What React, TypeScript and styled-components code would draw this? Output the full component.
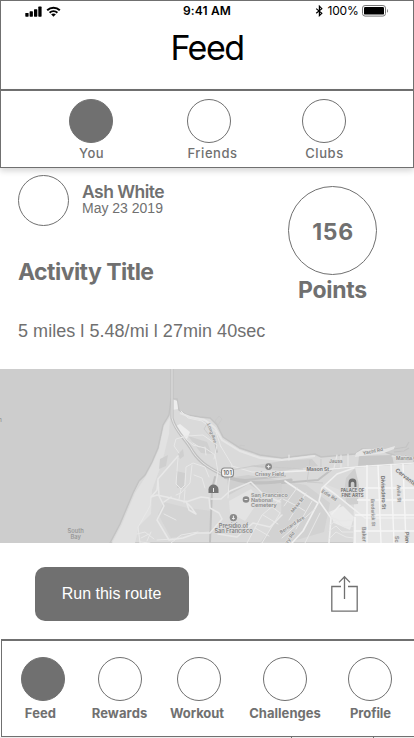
import React from 'react';
import styled, { createGlobalStyle, css } from 'styled-components';

const INK = '#707070';
const SANS = '"Inter", "Roboto", sans-serif';
const HELV = '"Liberation Sans", Arial, sans-serif';

const GlobalStyle = createGlobalStyle`
  *, *::before, *::after { box-sizing: border-box; }
  html, body { margin: 0; padding: 0; background: #fff; overflow: hidden; }
  #root { width: 414px; }
`;

const Screen = styled.div`
  display: flex;
  flex-direction: column;
  width: 414px;
  height: 738px;
  overflow: hidden;
  background: #fff;
  color: ${INK};
  font-family: ${SANS};
`;

const Header = styled.header`
  display: flex;
  flex-direction: column;
  height: 90px;
  flex: none;
  border: 1px solid ${INK};
  color: #000;
`;

const StatusBar = styled.div`
  display: grid;
  grid-template-columns: 1fr auto 1fr;
  align-items: center;
  height: 20px;
  padding: 0 24px;
`;

const StatusGroup = styled.div<{ $end?: boolean }>`
  display: flex;
  align-items: center;
  gap: ${(p) => (p.$end ? 3.5 : 2.5)}px;
  justify-content: ${(p) => (p.$end ? 'flex-end' : 'flex-start')};
`;

const StatusText = styled.span<{ $strong?: boolean }>`
  font-size: 12px;
  line-height: 18px;
  font-weight: ${(p) => (p.$strong ? 600 : 400)};
  letter-spacing: ${(p) => (p.$strong ? '0.14px' : '-0.2px')};
`;

const PageTitle = styled.h1`
  margin: 7px 0 0;
  text-align: center;
  font-size: 34px;
  line-height: 40px;
  font-weight: 400;
  letter-spacing: -1.5px;
`;

const Tabs = styled.nav`
  display: grid;
  grid-template-columns: 146px 90px 140px;
  justify-content: start;
  height: 78px;
  flex: none;
  padding: 8px 0 0 17px;
  border: 1px solid ${INK};
  background: #fff;
  box-shadow: 0 3px 6px rgba(0, 0, 0, 0.16);
  z-index: 1;
`;

const BottomNav = styled.nav`
  display: grid;
  grid-template-columns: 77px 77px 81px 91px 79px;
  height: 98px;
  flex: none;
  margin-left: 1px;
  padding: 16px 0 0 2.5px;
  border: 1px solid ${INK};
  border-top-width: 2px;
  border-right: 0;
`;

const NavItem = styled.div`
  display: flex;
  flex-direction: column;
  align-items: center;
`;

const Ring = styled.span<{ $size: number; $filled?: boolean }>`
  display: flex;
  align-items: center;
  justify-content: center;
  flex: none;
  width: ${(p) => p.$size}px;
  height: ${(p) => p.$size}px;
  border: 1px solid ${INK};
  border-radius: 50%;
  background: ${(p) => (p.$filled ? INK : '#fff')};
`;

const NavLabel = styled.span<{ $bold?: boolean; $shift?: number; $track?: number }>`
  font-size: 13px;
  line-height: 16px;
  white-space: nowrap;
  font-weight: ${(p) => (p.$bold ? 700 : 500)};
  letter-spacing: ${(p) => p.$track ?? 0}px;
  margin-top: ${(p) => (p.$bold ? 4 : 2)}px;
  transform: translateX(${(p) => p.$shift ?? 0}px);
`;

const Activity = styled.section`
  display: flex;
  justify-content: space-between;
  height: 201px;
  flex: none;
  padding: 0 37px 0 18px;
`;

const Summary = styled.div`
  display: flex;
  flex-direction: column;
  padding-top: 7px;
`;

const Author = styled.div`
  display: flex;
  gap: 13px;
`;

const AuthorText = styled.div`
  display: flex;
  flex-direction: column;
  padding-top: 7px;
`;

const Name = styled.span`
  font-size: 17.5px;
  line-height: 20px;
  font-weight: 600;
  letter-spacing: -0.54px;
`;

const DateLine = styled.span`
  font-family: ${HELV};
  font-size: 14px;
  line-height: 16px;
  margin-top: -2px;
`;

const heading = css`
  margin: 0;
  font-size: 23px;
  line-height: 28px;
  font-weight: 700;
`;

const ActivityTitle = styled.h2`
  ${heading}
  margin-top: 32px;
  letter-spacing: -0.54px;
`;

const Stats = styled.p`
  margin: 35px 0 0;
  font-family: ${HELV};
  font-size: 18px;
  line-height: 20px;
  letter-spacing: 0.04px;
  white-space: nowrap;
`;

const Score = styled.div`
  display: flex;
  flex-direction: column;
  align-items: center;
  padding-top: 18px;
`;

const ScoreValue = styled.span`
  ${heading}
  letter-spacing: 0.7px;
  padding: 2px 0 0 1px;
`;

const ScoreLabel = styled.span`
  ${heading}
  margin-top: 1px;
  letter-spacing: -0.25px;
`;

const MapFrame = styled.div`
  height: 174px;
  flex: none;
  background: #cdcdcd;
  svg { display: block; }
`;

const Actions = styled.section`
  display: flex;
  justify-content: space-between;
  align-items: flex-start;
  height: 96px;
  flex: none;
  padding: 24px 56px 0 35px;
`;

const RunButton = styled.button`
  width: 154px;
  height: 54px;
  padding: 0 1px 1px 0;
  border: 0;
  border-radius: 10px;
  background: ${INK};
  color: #fff;
  font-family: ${HELV};
  font-size: 16px;
`;

const ShareButton = styled.button`
  display: flex;
  padding: 8px 0 0;
  border: 0;
  background: none;
  color: ${INK};
`;

const FooterEdge = styled.div`
  display: flex;
  gap: 81px;
  height: 1px;
  flex: none;
  padding-left: 291px;
  background: #eee;
`;
const Tick = styled.span`
  width: 1px;
  height: 1px;
  background: ${INK};
`;

const SignalIcon = () => (
  <svg width="18" height="11" viewBox="0 0 18 11">
    <rect x="0.3" y="7" width="3.3" height="3.7" rx=".6" />
    <rect x="4.6" y="5.3" width="3.3" height="5.4" rx=".6" />
    <rect x="9" y="3.2" width="3.3" height="7.5" rx=".6" />
    <rect x="13.3" y="0.6" width="3.3" height="10.1" rx=".6" />
  </svg>
);

const WifiIcon = () => (
  <svg width="15" height="11" viewBox="0 0 15 11" fill="none" stroke="#000" strokeWidth="2">
    <path d="M1.2 4.2C4.8.8 10.2.8 13.8 4.2" />
    <path d="M3.6 6.8C5.8 4.8 9.2 4.8 11.4 6.8" />
    <path d="M5.1 8.3 7.5 10.8 9.9 8.3C8.5 7.2 6.5 7.2 5.1 8.3Z" fill="#000" stroke="none" />
  </svg>
);

const BluetoothIcon = () => (
  <svg width="9" height="12" viewBox="0 0 9 12" fill="none" stroke="#000" strokeWidth="1.2">
    <path d="M1.2 3.6 6.8 8.2 4.4 10.6V1.2L6.8 3.6 1.2 8.2" />
  </svg>
);

const BatteryIcon = () => (
  <svg width="27" height="12" viewBox="0 0 27 12">
    <rect x="0.5" y="0.5" width="23" height="10.6" rx="2.6" fill="none" stroke="#777" />
    <rect x="2" y="2" width="20" height="7.6" rx="1.2" />
    <path d="M25 4v3.8c1.3-.6 1.3-3.2 0-3.8Z" fill="#777" />
  </svg>
);

const ShareIcon = () => (
  <svg width="27" height="38" viewBox="0 0 27 38" fill="none" stroke="currentColor" strokeWidth="1.3">
    <path d="M10 11.5H.8V36.2H26.2V11.5H17" />
    <path d="M13.5 24V2M8 7.4 13.5 1.8 19 7.4" />
  </svg>
);

const gridStreets = [
  'M359 119H414M357 131H414M355 146H414M354 162H414',
  'M367 96V174M378 96 381 174M391 95 394 174M403 95 406 174M355 148V174',
];

const RouteMap = () => (
  <svg width="414" height="174" viewBox="0 0 414 174" fontFamily={SANS}>
    <rect width="414" height="174" fill="#cdcdcd" />
    <path
      d="M110 174 120 155 133 124 139 112 145 106 152 93 158 79 163 56 169 46 171 30 177 30 179 41 187 46 200 48 210 49 217 56 223 68 240 79 260 86 282 89 315 85 321 88 355 85 362 80 382 82 408 91 414 90V174Z"
      fill="#dadada"
      stroke="#c3c3c3"
      strokeWidth="1.4"
    />
    <path d="M112 174 122 155 135 124 146 107 153 94 159 80 164 57 170 48 169 65 162 94 152 121 151 145 139 157 135 174Z" fill="#e2e2e2" />
    <path d="M205 51 215 59 222 71 240 82 260 89 282 91 315 87 M180 44 190 48 205 51" fill="none" stroke="#e6e6e6" strokeWidth="2" />
    <path d="M172 30 177 32 178 40 172 41ZM176 57 180 55 190 63 187 70 182 67Z" fill="#ededed" />
    <path d="M178 85 183 80 184 87 180 90ZM160 90 168 86 166 97 159 100ZM176 102 185 104 184 119 177 119Z" fill="#cfcfcf" />
    <path d="M188 67 207 73 212 85 201 84Z" fill="#d0d0d0" />
    <path d="M282 92 312 90 318 97 281 102 250 97Z" fill="#cecece" />
    <path d="M359 87 392 86 394 96 358 97Z" fill="#c7c7c7" />
    <path d="M355 88 356 84 363 80 385 80 395 77 394 80 384 84 361 87Z" fill="#e6e6e6" />
    <path d="M394 80 406 78 409 73M394 83 404 82 409 79" fill="none" stroke="#c3c3c3" strokeWidth="1.2" />
    <path d="M355 98 414 95V174H353Z" fill="#e6e6e6" />
    <path d="M346 109 355 99 359 116 358 135 347 136 344 123Z" fill="#cfcfcf" />
    <path d="M329 143 343 137 354 148 350 161 334 154Z" fill="#eaeaea" />
    <path d="M229 132 251 120 260 130 245 152 230 144Z" fill="#e3e3e3" />
    <path d="M158 145 164 133 188 139 212 142 209 162 171 169Z" fill="#d4d4d4" />
    <path d="M227 109 248 106 290 113 280 130 262 124 249 115 229 126Z" fill="#cfcfcf" />
    <path d="M282 112 306 116 330 134 324 163 286 174H260L281 147Z" fill="#d2d2d2" />
    <path d="M325 115 345 123 333 132 321 123Z" fill="#dfdfdf" />

    <g fill="none" stroke="#c1c1c1" strokeLinecap="round" strokeLinejoin="round">
      <path d="M172 0V49C175 62 186 70 193 83 201 95 211 100 225 107 246 116 266 115 291 111" strokeWidth="3.2" />
      <path d="M215 108 212 120 210 173M282 114 318 111 331 101M225 109 245 111 285 107" strokeWidth="2" />
      <path d="M207 55 211 63 215 73 217 83M330 100 353 98 414 94" strokeWidth="1.5" />
    </g>
    <g fill="none" stroke="#e8e8e8" strokeLinecap="round" strokeLinejoin="round">
      <path d="M172 0V49C175 62 186 70 193 83 201 95 211 100 225 107" strokeWidth="0.9" />
      <path
        strokeWidth="1"
        d="M181 66 193 76 205 79 215 86 218 103 215 120M179 84 174 77 176 70 187 67 203 66 217 76 214 90M193 74 199 78M205 78 206 86M178 89 176 115 181 120 185 116 186 98 193 94 205 98 209 108M192 96 190 114 181 124 176 126M194 106 202 109 205 119M181 120 179 130M185 121 184 134"
      />
      <path
        strokeWidth="1.5"
        d="M178 87 158 110 157 121 151 128 157 126 171 129 186 133 201 128 209 129 210 139 219 144 222 150 210 164 197 164 183 169 169 171 157 151 164 137 159 127 158 110M186 132 189 141 196 145 191 138 187 134M164 133 171 128M211 130 221 130 230 122 251 113 264 126 280 133M218 165 237 168 253 154 270 158 282 146"
      />
      <path strokeWidth="1" d="M151 128 150 137 141 153 138 158 140 174M137 165 145 163 154 170M141 169 149 165M147 172 151 163M220 76 232 96 229 113 228 129M232 97 252 103 281 103 333 100" />
      <path strokeWidth="1.6" stroke="#efefef" d="M281 103 320 101 354 98 414 94M354 99 337 105 322 119 319 132 331 149 329 174M285 112 318 134 303 162 292 174M325 118 335 125 365 149H414M332 145 340 136" />
      <path strokeWidth="1" d="M297 119 284 137M306 124 289 151M312 132 296 160M283 130 297 137 305 142M315 140 282 169M320 144 305 174M331 148 340 152 354 151M330 156 337 151 344 158 354 157M329 162 336 157 342 163 353 163M329 170 336 163 346 168 354 169M281 130 262 146 247 174M271 137 280 144M263 146 278 155M255 159 269 167M280 144 262 174" />
      <path strokeWidth="1" d="M181 42 188 49 202 52 216 63 221 78M171 174 181 166 198 163M140 173 150 174M164 145 176 151M157 171 173 170" />
      <path strokeWidth="1.2" d="M289 86V91M341 86V99M348 85V97M337 86 334 99M392 87 414 89" />
    </g>
    <g fill="none" stroke="#c8c8c8" strokeWidth="0.8">
      <path d="M207 55 204 60 214 72M215 52 219 47 222 50 218 56ZM240 80V76L245 77M310 91 307 113 323 114M226 102 253 97 303 100M321 90V98" />
    </g>
    <g fill="none" stroke="#f6f6f6" strokeWidth="1.4">
      {gridStreets.map((d) => <path key={d} d={d} />)}
    </g>

    <rect x="221.5" y="99" width="12" height="9" rx="3" fill="#f2f2f2" stroke="#8a8a8a" strokeWidth="1.1" />
    <g fill="#8a8a8a">
      <circle cx="268.6" cy="97.6" r="3.4" />
      <circle cx="246" cy="130.5" r="3.3" />
      <circle cx="233.4" cy="148.6" r="3.7" />
      <path d="M208.5 124V120.5A5 5 0 0 1 218.5 120.5V124Z" fill="#757575" />
      <path d="M348.6 118V113.5A3.9 3.9 0 0 1 356.4 113.5V118H354.4V114.5A1.8 1.8 0 0 0 350.8 114.5V118Z" fill="#6c6c6c" />
    </g>
    <path d="M268.6 95.8V99.4M266.8 97.6H270.4M213.5 119V123M233.4 146.7V150.6M232 149.5H234.8M244.5 130.5H247.5" stroke="#eee" strokeWidth="1" fill="none" />
    <g fill="#8c8c8c" stroke="#e0e0e0" strokeWidth="1.2" paintOrder="stroke" fontSize="5.4" fontWeight="600">
      <text x="227.5" y="105.7" fontSize="5.7" fill="#666" textAnchor="middle" strokeWidth="0">101</text>
      <text x="255" y="106.5" fontSize="5.1">Crissy Field</text>
      <text x="251" y="128">San Francisco</text>
      <text x="251" y="133">National</text>
      <text x="251" y="138">Cemetery</text>
      <text x="233.5" y="158.5" textAnchor="middle" fill="#808080" fontSize="5.7">Presidio of</text>
      <text x="233.5" y="164" textAnchor="middle" fill="#808080" fontSize="5.6">San Francisco</text>
      <text x="352.5" y="123.3" textAnchor="middle" fontSize="4.3" fill="#666">PALACE OF</text>
      <text x="352.5" y="127.6" textAnchor="middle" fontSize="4.3" fill="#666">FINE ARTS</text>
      <text x="306.5" y="101.5" fontSize="5" fill="#707070">Mason St</text>
      <text x="329" y="94" fontSize="4.8">Jauss</text>
      <text x="363.5" y="86" fontSize="4.8" transform="rotate(-12 363 87)">Yacht Rd</text>
      <text x="396" y="91" fontSize="4.8">Marina Green</text>
      <text transform="translate(395 102) rotate(38)" fontSize="5.5" fill="#707070">Cervantes Blvd</text>
      <text transform="translate(321 123) rotate(32)" fontSize="4.8">Edie Rd</text>
      <text transform="translate(381 107) rotate(88)" fontSize="5.2" fill="#6c6c6c">Divisadero St</text>
      <text transform="translate(371 130) rotate(88)" fontSize="4.6">Broderick St</text>
      <text transform="translate(397 116) rotate(88)" fontSize="4.8">Avila St</text>
      <text transform="translate(362 158) rotate(88)">Baker St</text>
      <text transform="translate(395 167) rotate(88)">Scott St</text>
      <text transform="translate(405 163) rotate(88)" fill="#6c6c6c">Pierce St</text>
      <text transform="translate(293 144) rotate(-52)" fontSize="4.6">Mesa St</text>
      <text transform="translate(281 165) rotate(-33)" fontSize="4.8">Bernard Ave</text>
      <text transform="translate(284 181) rotate(-57)" fontSize="4.8">Barry Rd</text>
      <text transform="translate(207 55) rotate(70)" fontSize="4.6">Long Ave</text>
    </g>
    <g fill="#999" fontSize="5.8" fontWeight="600" textAnchor="middle">
      <text x="75.7" y="164.3">South</text>
      <text x="75.7" y="170.3">Bay</text>
      <text x="0" y="53">n</text>
    </g>
  </svg>
);

const tabs = [
  { label: 'You', track: 0.47, shift: 0.5, filled: true },
  { label: 'Friends', track: 0.53, shift: 3.5 },
  { label: 'Clubs', track: 0.57, shift: 0.5 },
];

const sections = [
  { label: 'Feed', track: 0.1, shift: -2.5, filled: true },
  { label: 'Rewards', track: 0.1, shift: -0.5 },
  { label: 'Workout', track: -0.06, shift: -2 },
  { label: 'Challenges', track: 0.03, shift: 0 },
  { label: 'Profile', track: -0.06, shift: 0.5 },
];

export default function App() {
  return (
    <>
      <GlobalStyle />
      <Screen>
        <Header>
          <StatusBar>
            <StatusGroup><SignalIcon /><WifiIcon /></StatusGroup>
            <StatusText $strong>9:41 AM</StatusText>
            <StatusGroup $end>
              <BluetoothIcon />
              <StatusText>100%</StatusText>
              <BatteryIcon />
            </StatusGroup>
          </StatusBar>
          <PageTitle>Feed</PageTitle>
        </Header>
        <Tabs>
          {tabs.map((t) => (
            <NavItem key={t.label}>
              <Ring $size={44} $filled={t.filled} />
              <NavLabel $track={t.track} $shift={t.shift}>{t.label}</NavLabel>
            </NavItem>
          ))}
        </Tabs>
        <Activity>
          <Summary>
            <Author>
              <Ring $size={51} />
              <AuthorText>
                <Name>Ash White</Name>
                <DateLine>May 23 2019</DateLine>
              </AuthorText>
            </Author>
            <ActivityTitle>Activity Title</ActivityTitle>
            <Stats>5 miles l 5.48/mi l 27min 40sec</Stats>
          </Summary>
          <Score>
            <Ring $size={89}><ScoreValue>156</ScoreValue></Ring>
            <ScoreLabel>Points</ScoreLabel>
          </Score>
        </Activity>
        <MapFrame><RouteMap /></MapFrame>
        <Actions>
          <RunButton>Run this route</RunButton>
          <ShareButton aria-label="Share"><ShareIcon /></ShareButton>
        </Actions>
        <BottomNav>
          {sections.map((s) => (
            <NavItem key={s.label}>
              <Ring $size={44} $filled={s.filled} />
              <NavLabel $bold $track={s.track} $shift={s.shift}>{s.label}</NavLabel>
            </NavItem>
          ))}
        </BottomNav>
        <FooterEdge><Tick /><Tick /></FooterEdge>
      </Screen>
    </>
  );
}
